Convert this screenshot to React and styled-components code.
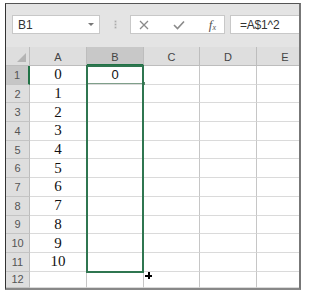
import React from 'react';
import styled, { createGlobalStyle } from 'styled-components';

const GlobalStyle = createGlobalStyle`
  html, body { margin: 0; background: #fff; }
  body { font-family: "Liberation Sans", Arial, sans-serif; }
`;

const Page = styled.div`
  padding: 3px 0 0 5px;
`;

const Frame = styled.div`
  width: 296px;
  height: 287px;
  box-sizing: border-box;
  border-top: 1px solid #555;
  border-left: 1px solid #333;
  border-right: 2px solid #777;
  border-bottom: 2px solid #888;
  background: #e4e4e4;
  overflow: hidden;
  display: flex;
  flex-direction: column;
`;

const Toolbar = styled.div`
  height: 43px;
  flex: none;
  display: flex;
  align-items: flex-start;
  padding: 11px 0 0 6px;
  box-sizing: border-box;
`;

const Box = styled.div`
  height: 19px;
  box-sizing: border-box;
  background: #fff;
  border: 1px solid #c8c8c8;
  display: flex;
  align-items: center;
  font-size: 12px;
  color: #333;
`;

const NameBox = styled(Box)`
  width: 88px;
  padding: 0 5px;
  justify-content: space-between;
`;

const Caret = styled.span`
  width: 0;
  height: 0;
  border-left: 3px solid transparent;
  border-right: 3px solid transparent;
  border-top: 3px solid #777;
`;

const Dots = styled.div`
  width: 30px;
  height: 19px;
  display: flex;
  flex-direction: column;
  align-items: center;
  justify-content: center;
  gap: 2px;
  span {
    width: 1px;
    height: 1px;
    background: #aaa;
    box-shadow: 0 0 0 0.5px #bbb;
  }
`;

const FxGroup = styled(Box)`
  width: 95px;
  padding: 0 8px 0 8px;
  justify-content: space-between;
  color: #888;
`;

const Fx = styled.span`
  font-family: "Liberation Serif", serif;
  font-style: italic;
  font-size: 13px;
  color: #555;
  sub {
    font-size: 8px;
    vertical-align: -1px;
  }
`;

const Formula = styled(Box)`
  margin-left: 5px;
  flex: 1;
  border-right: none;
  padding-left: 9px;
  letter-spacing: -0.2px;
`;

const Grid = styled.div`
  position: relative;
  flex: 1;
  display: grid;
  grid-template-columns: 24px 57px 57px 56px 57px 57px;
  grid-template-rows: 19px repeat(11, 18.7px) 1fr;
  background: #fff;
`;

const Corner = styled.div`
  background: #dedede;
  border-right: 1px solid #bdbdbd;
  border-bottom: 1px solid #bdbdbd;
  position: relative;
  box-sizing: border-box;
  &::after {
    content: '';
    position: absolute;
    right: 3px;
    bottom: 3px;
    border-left: 9px solid transparent;
    border-bottom: 9px solid #b4b4b4;
  }
`;

const ColHead = styled.div`
  box-sizing: border-box;
  background: ${p => (p.$active ? '#c8c8c8' : '#dedede')};
  border-right: 1px solid #bdbdbd;
  border-bottom: ${p => (p.$active ? '2px solid #217346' : '1px solid #bdbdbd')};
  display: flex;
  align-items: center;
  justify-content: center;
  font-size: 11px;
  color: #444;
  padding-top: 2px;
`;

const RowHead = styled.div`
  box-sizing: border-box;
  background: ${p => (p.$active ? '#c6c6c6' : '#dedede')};
  border-right: ${p => (p.$active ? '2px solid #217346' : '1px solid #bdbdbd')};
  border-bottom: 1px solid #c4c4c4;
  display: flex;
  align-items: center;
  justify-content: center;
  font-size: 11px;
  color: #555;
`;

const Cell = styled.div`
  box-sizing: border-box;
  border-right: 1px solid #c6c6c6;
  border-bottom: 1px solid #dadada;
  display: flex;
  align-items: center;
  justify-content: center;
  font-family: ${p => (p.$serif ? '"Liberation Serif", serif' : '"Liberation Sans", sans-serif')};
  font-size: ${p => (p.$serif ? '15px' : '13px')};
  color: #111;
`;

const Selection = styled.div`
  position: absolute;
  left: 80px;
  top: 18px;
  width: 58px;
  height: 208px;
  box-sizing: border-box;
  border: 2px solid #2f7650;
  pointer-events: none;
`;

const ActiveLine = styled.div`
  position: absolute;
  left: 82px;
  top: 36px;
  width: 54px;
  height: 1px;
  background: #7f9f8a;
  &::after {
    content: '';
    position: absolute;
    right: -3px;
    top: -1px;
    width: 3px;
    height: 3px;
    background: #5d8a6c;
  }
`;

const Cross = styled.div`
  position: absolute;
  left: 139px;
  top: 225px;
  width: 7px;
  height: 7px;
  &::before, &::after {
    content: '';
    position: absolute;
    background: #000;
  }
  &::before { left: 3px; top: 0; width: 1.5px; height: 7px; }
  &::after { left: 0; top: 3px; width: 7px; height: 1.5px; }
`;

const cols = ['A', 'B', 'C', 'D', 'E'];

export default function App() {
  const rows = Array.from({ length: 12 }, (_, i) => i + 1);
  return (
    <Page>
      <GlobalStyle />
      <Frame>
        <Toolbar>
          <NameBox>
            <span>B1</span>
            <Caret />
          </NameBox>
          <Dots><span /><span /><span /></Dots>
          <FxGroup>
            <svg width="10" height="10" viewBox="0 0 10 10">
              <path d="M1 1 L9 9 M9 1 L1 9" stroke="#8a8a8a" strokeWidth="1.3" />
            </svg>
            <svg width="12" height="10" viewBox="0 0 12 10">
              <path d="M1 5 L4.5 8.5 L11 1.5" stroke="#8a8a8a" strokeWidth="1.6" fill="none" />
            </svg>
            <Fx>f<sub>x</sub></Fx>
          </FxGroup>
          <Formula>=A$1^2</Formula>
        </Toolbar>
        <Grid>
          <Corner />
          {cols.map(c => (
            <ColHead key={c} $active={c === 'B'}>{c}</ColHead>
          ))}
          {rows.map(r => (
            <React.Fragment key={r}>
              <RowHead $active={r === 1}>{r}</RowHead>
              <Cell $serif>{r <= 11 ? r - 1 : ''}</Cell>
              <Cell>{r === 1 ? '0' : ''}</Cell>
              <Cell />
              <Cell />
              <Cell />
            </React.Fragment>
          ))}
          <ActiveLine />
          <Selection />
          <Cross />
        </Grid>
      </Frame>
    </Page>
  );
}
